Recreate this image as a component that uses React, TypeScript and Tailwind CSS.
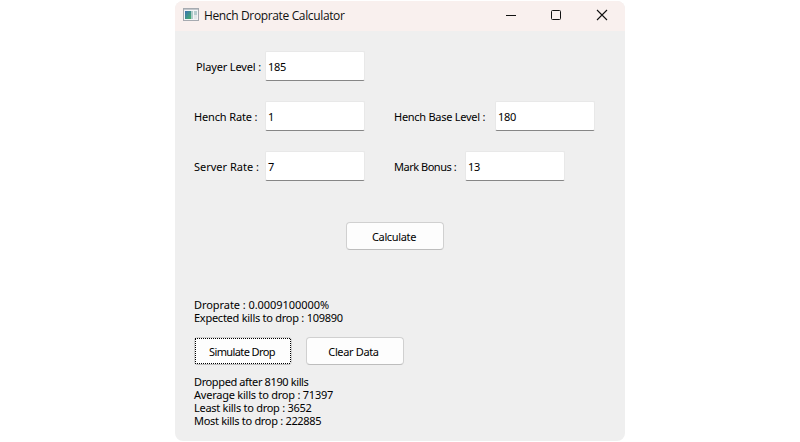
import React from 'react';

const label = "font-['Noto_Sans',Tahoma,sans-serif] text-[11px] leading-[13px] whitespace-pre text-black";

function Field({ name, value, labelClass }: { name: string; value: string; labelClass: string }) {
  return (
    <div className="flex h-[30px] items-center">
      <label className={`${label} shrink-0 ${labelClass}`}>{name}</label>
      <div className={`${label} flex h-[30px] w-[100px] shrink-0 items-center rounded-[2px] border border-[#e8e8e8] border-b-[#868686] bg-white pl-[2px] tracking-[-0.35px]`}>
        {value}
      </div>
    </div>
  );
}

function Button({ text, focused = false, className = '' }: { text: string; focused?: boolean; className?: string }) {
  return (
    <button className={`${label} relative flex h-[28px] w-[98px] items-center justify-center rounded-[4px] border border-[#d0d0d0] border-b-[#bdbdbd] bg-[#fdfdfd] pt-px ${className}`}>
      {text}
      {focused && (
        <svg className="absolute -inset-px" width="98" height="28" fill="none" stroke="#000" shapeRendering="crispEdges">
          <path strokeDasharray="1 1" d="M1 1.5H97M1 26.5H97M1.5 2V26M96.5 2V26" />
        </svg>
      )}
    </button>
  );
}

export default function App() {
  return (
    <div className="flex h-[442px] w-[800px] justify-center bg-white pt-px">
      <div className="flex h-[440px] w-[450px] flex-col overflow-hidden rounded-[8px] bg-[#efefef]">
        <header className="flex h-[30px] shrink-0 items-center bg-[#f9f0ee]">
          <svg className="mb-[2px] ml-[8px] shrink-0" width="16" height="14" viewBox="0 0 16 14">
            <defs>
              <linearGradient id="screen" x1="0" y1="0" x2="1" y2="1">
                <stop offset="0" stopColor="#3d70b4" />
                <stop offset="1" stopColor="#43b069" />
              </linearGradient>
            </defs>
            <rect x=".5" y=".5" width="15" height="12" fill="#f4f5f6" stroke="#a6aab0" />
            <path d="M1 1.5H15" stroke="#c3c7cc" />
            <rect x="2" y="3" width="6" height="8" fill="url(#screen)" />
            <rect x="8" y="3" width="2" height="8" fill="#aecbc9" />
            <rect x="11" y="3" width="3" height="4" fill="#b5ccce" />
            <rect x="11" y="7" width="3" height="4" fill="#e4e7e9" />
          </svg>
          <h1 className="ml-[5px] whitespace-pre font-['Open_Sans','Segoe_UI',sans-serif] text-[12px] leading-[16px] tracking-[-0.36px] text-[#111]">Hench Droprate Calculator</h1>
          <svg className="mr-[17px] mb-[2px] ml-auto shrink-0" width="103" height="12" viewBox="0 0 103 12" fill="none" stroke="#111">
            <path d="M1 6.5H11" />
            <rect x="46.5" y="1.5" width="9" height="9" rx="1" />
            <path d="M92 1L102 11M102 1L92 11" strokeWidth="1.1" />
          </svg>
        </header>
        <main className="flex flex-col pt-[20px] pl-[19px]">
          <Field name="Player Level :" value="185" labelClass="w-[71px] pl-[2px] tracking-[-0.15px]" />
          <div className="mt-[20px] flex">
            <Field name="Hench Rate :" value="1" labelClass="w-[71px] tracking-[-0.15px]" />
            <div className="w-[29px]" />
            <Field name="Hench Base Level :" value="180" labelClass="w-[101px] tracking-[-0.27px]" />
          </div>
          <div className="mt-[20px] flex">
            <Field name="Server Rate :" value="7" labelClass="w-[71px]" />
            <div className="w-[29px]" />
            <Field name="Mark Bonus :" value="13" labelClass="w-[71px] tracking-[-0.48px]" />
          </div>
          <Button text="Calculate" className="mt-[41px] ml-[152px] pr-[2px] tracking-[-0.35px]" />
          <div className={`${label} mt-[48px] flex flex-col items-start`}>
            <span className="tracking-[-0.06px]">Droprate : 0.0009100000%</span>
            <span className="tracking-[-0.26px]">Expected kills to drop : 109890</span>
          </div>
          <div className="mt-[13px] flex gap-[14px]">
            <Button text="Simulate Drop" focused className="pr-[2px] tracking-[-0.6px]" />
            <Button text="Clear Data" className="pr-[3px] tracking-[-0.35px]" />
          </div>
          <div className={`${label} mt-[10px] flex flex-col items-start`}>
            <span className="tracking-[-0.38px]">Dropped after 8190 kills</span>
            <span className="tracking-[-0.23px]">Average kills to drop : 71397</span>
            <span className="tracking-[-0.27px]">Least kills to drop : 3652</span>
            <span className="tracking-[-0.31px]">Most kills to drop : 222885</span>
          </div>
        </main>
      </div>
    </div>
  );
}
